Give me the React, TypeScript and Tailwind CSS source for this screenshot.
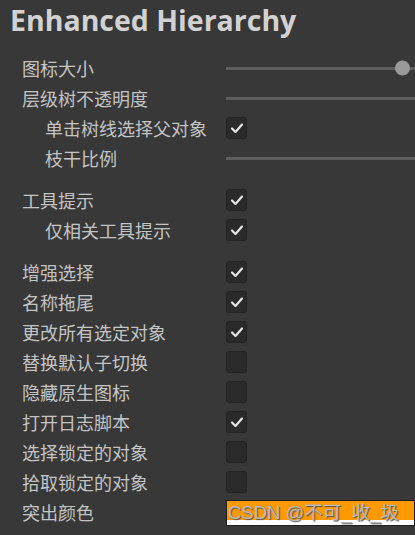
import React from "react";

type Row =
  | { kind: "slider"; label: string; indent?: boolean; thumb?: boolean }
  | { kind: "check"; label: string; indent?: boolean; checked: boolean }
  | { kind: "color"; label: string }
  | { kind: "gap" };

const rows: Row[] = [
  { kind: "slider", label: "图标大小", thumb: true },
  { kind: "slider", label: "层级树不透明度" },
  { kind: "check", label: "单击树线选择父对象", indent: true, checked: true },
  { kind: "slider", label: "枝干比例", indent: true },
  { kind: "gap" },
  { kind: "check", label: "工具提示", checked: true },
  { kind: "check", label: "仅相关工具提示", indent: true, checked: true },
  { kind: "gap" },
  { kind: "check", label: "增强选择", checked: true },
  { kind: "check", label: "名称拖尾", checked: true },
  { kind: "check", label: "更改所有选定对象", checked: true },
  { kind: "check", label: "替换默认子切换", checked: false },
  { kind: "check", label: "隐藏原生图标", checked: false },
  { kind: "check", label: "打开日志脚本", checked: true },
  { kind: "check", label: "选择锁定的对象", checked: false },
  { kind: "check", label: "拾取锁定的对象", checked: false },
  { kind: "color", label: "突出颜色" },
];

const Checkbox = ({ checked }: { checked: boolean }) => (
  <div className="w-[21px] h-[22px] rounded-[3px] bg-[#2a2a2a] border border-[#232323] flex items-center justify-center">
    {checked && (
      <svg width="14" height="12" viewBox="0 0 14 12" fill="none">
        <path d="M2 6.5 L5.5 10 L12 2.5" stroke="#e6e6e6" strokeWidth="2.2" strokeLinecap="round" strokeLinejoin="round" />
      </svg>
    )}
  </div>
);

const Slider = ({ thumb }: { thumb?: boolean }) => (
  <div className="relative flex-1 h-[3px] bg-[#5e5e5e]">
    {thumb && (
      <div className="absolute right-[5px] top-1/2 -translate-y-1/2 w-[15px] h-[15px] rounded-full bg-[#9a9a9a]" />
    )}
  </div>
);

export default function App() {
  return (
    <div
      className="w-[415px] h-[535px] bg-[#383838] overflow-hidden text-[#c4c4c4]"
      style={{ fontFamily: '"Noto Sans", "Noto Sans CJK SC", sans-serif' }}
    >
      <h1
        className="pl-[10px] pt-[1px] h-[53px] text-[28.5px] font-bold text-[#d2d2d2] leading-[38px]"
        style={{ fontFamily: '"Open Sans", "Noto Sans", sans-serif' }}
      >
        Enhanced Hierarchy
      </h1>
      <div className="flex flex-col">
        {rows.map((r, i) => {
          if (r.kind === "gap") return <div key={i} className="h-[12px]" />;
          const indent = "indent" in r && r.indent;
          return (
            <div key={i} className="flex items-center h-[30px]">
              <div
                className={`w-[226px] shrink-0 text-[18px] leading-none ${indent ? "pl-[45px]" : "pl-[22px]"}`}
                style={{ fontFamily: '"Noto Sans CJK SC", sans-serif' }}
              >
                {r.label}
              </div>
              {r.kind === "slider" && <Slider thumb={r.thumb} />}
              {r.kind === "check" && <Checkbox checked={r.checked} />}
              {r.kind === "color" && (
                <div className="relative flex-1 h-[26px] mt-[2px] border border-[#1e1e1e] bg-[#ff9900] flex flex-col justify-end">
                  <div className="h-[5px] bg-white" />
                  <span
                    className="absolute left-[1px] top-[1px] text-[18.5px] leading-[22px] text-[#b8b8b8] [text-shadow:1px_1px_1px_#555] whitespace-nowrap"
                    style={{ fontFamily: '"Liberation Sans", "Noto Sans CJK SC", sans-serif' }}
                  >
                    CSDN @不可_收_圾
                  </span>
                </div>
              )}
            </div>
          );
        })}
      </div>
    </div>
  );
}
